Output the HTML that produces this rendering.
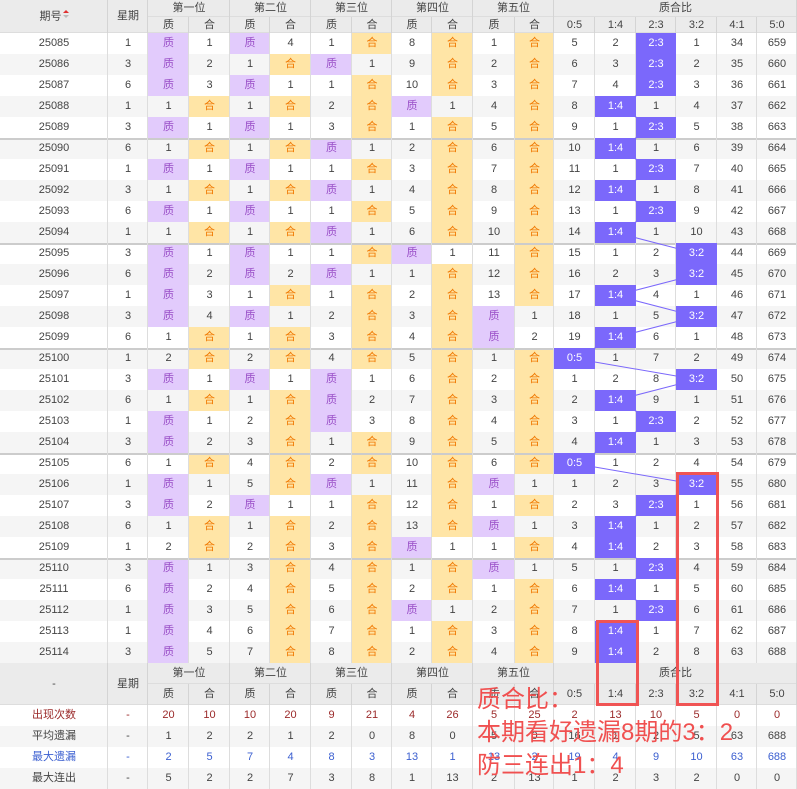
<!DOCTYPE html>
<html><head><meta charset="utf-8">
<style>
*{margin:0;padding:0;box-sizing:border-box}
body{width:797px;height:788px;overflow:hidden;background:#fff;font-family:"Liberation Sans","Noto Sans CJK SC",sans-serif;font-size:11px;color:#444;position:relative}
table{border-collapse:collapse;table-layout:fixed;width:797px;position:absolute;left:0;top:0}
td{height:21px;padding:0;text-align:center;white-space:nowrap;box-shadow:inset -1px 0 0 #ddd;line-height:21px;overflow:hidden}
tr.e td{background:#f5f5f5}
tr.g td{box-shadow:inset -1px 0 0 #ddd,inset 0 2px 0 #ccc}
.hd td{background:#ebebeb;color:#444;font-size:11px;box-shadow:inset -1px 0 0 #d4d4d4,inset 0 -1px 0 #ddd}
.h1 td{height:17px;line-height:17px}
.h2 td{height:16px;line-height:16px}
.f1 td{height:21px;line-height:21px}
td.z{background:#e2cbfc!important;color:#9a4fc8}
td.h{background:#ffe5a6!important;color:#f07800}
td.a{background:#7b68fb!important;color:#fff;position:relative;z-index:2;box-shadow:none!important}
tr.r td{color:#9b2a2a}
tr.b td{color:#3b5fd0}
svg{position:absolute;left:0;top:0;z-index:1}
.box{position:absolute;border:3px solid #f05454;z-index:3}
.note{position:absolute;left:477px;top:683px;z-index:4;color:#f05050;font-size:24px;line-height:33px;font-family:"Liberation Sans","Noto Sans CJK SC",sans-serif;white-space:nowrap}
.arr{display:inline-block;width:6px;vertical-align:middle;margin-left:1px}
</style></head><body>
<table>
<colgroup><col style="width:108px"><col style="width:40px"><col style="width:41px"><col style="width:41px"><col style="width:40px"><col style="width:41px"><col style="width:41px"><col style="width:40px"><col style="width:40px"><col style="width:41px"><col style="width:42px"><col style="width:39px"><col style="width:41px"><col style="width:41px"><col style="width:40px"><col style="width:41px"><col style="width:40px"><col style="width:40px"></colgroup>
<tr class="hd h1"><td rowspan="2">期号<span class="arr"><svg width="6" height="10" style="position:static"><path d="M0 4L3 1L6 4Z" fill="#e03030"/><path d="M0 6L3 9L6 6Z" fill="#bbb"/></svg></span></td><td rowspan="2">星期</td><td colspan="2">第一位</td><td colspan="2">第二位</td><td colspan="2">第三位</td><td colspan="2">第四位</td><td colspan="2">第五位</td><td colspan="6">质合比</td></tr>
<tr class="hd h2"><td>质</td><td>合</td><td>质</td><td>合</td><td>质</td><td>合</td><td>质</td><td>合</td><td>质</td><td>合</td><td>0:5</td><td>1:4</td><td>2:3</td><td>3:2</td><td>4:1</td><td>5:0</td></tr>
<tr><td>25085</td><td>1</td><td class="z">质</td><td>1</td><td class="z">质</td><td>4</td><td>1</td><td class="h">合</td><td>8</td><td class="h">合</td><td>1</td><td class="h">合</td><td>5</td><td>2</td><td class="a">2:3</td><td>1</td><td>34</td><td>659</td></tr>
<tr class="e"><td>25086</td><td>3</td><td class="z">质</td><td>2</td><td>1</td><td class="h">合</td><td class="z">质</td><td>1</td><td>9</td><td class="h">合</td><td>2</td><td class="h">合</td><td>6</td><td>3</td><td class="a">2:3</td><td>2</td><td>35</td><td>660</td></tr>
<tr><td>25087</td><td>6</td><td class="z">质</td><td>3</td><td class="z">质</td><td>1</td><td>1</td><td class="h">合</td><td>10</td><td class="h">合</td><td>3</td><td class="h">合</td><td>7</td><td>4</td><td class="a">2:3</td><td>3</td><td>36</td><td>661</td></tr>
<tr class="e"><td>25088</td><td>1</td><td>1</td><td class="h">合</td><td>1</td><td class="h">合</td><td>2</td><td class="h">合</td><td class="z">质</td><td>1</td><td>4</td><td class="h">合</td><td>8</td><td class="a">1:4</td><td>1</td><td>4</td><td>37</td><td>662</td></tr>
<tr><td>25089</td><td>3</td><td class="z">质</td><td>1</td><td class="z">质</td><td>1</td><td>3</td><td class="h">合</td><td>1</td><td class="h">合</td><td>5</td><td class="h">合</td><td>9</td><td>1</td><td class="a">2:3</td><td>5</td><td>38</td><td>663</td></tr>
<tr class="e g"><td>25090</td><td>6</td><td>1</td><td class="h">合</td><td>1</td><td class="h">合</td><td class="z">质</td><td>1</td><td>2</td><td class="h">合</td><td>6</td><td class="h">合</td><td>10</td><td class="a">1:4</td><td>1</td><td>6</td><td>39</td><td>664</td></tr>
<tr><td>25091</td><td>1</td><td class="z">质</td><td>1</td><td class="z">质</td><td>1</td><td>1</td><td class="h">合</td><td>3</td><td class="h">合</td><td>7</td><td class="h">合</td><td>11</td><td>1</td><td class="a">2:3</td><td>7</td><td>40</td><td>665</td></tr>
<tr class="e"><td>25092</td><td>3</td><td>1</td><td class="h">合</td><td>1</td><td class="h">合</td><td class="z">质</td><td>1</td><td>4</td><td class="h">合</td><td>8</td><td class="h">合</td><td>12</td><td class="a">1:4</td><td>1</td><td>8</td><td>41</td><td>666</td></tr>
<tr><td>25093</td><td>6</td><td class="z">质</td><td>1</td><td class="z">质</td><td>1</td><td>1</td><td class="h">合</td><td>5</td><td class="h">合</td><td>9</td><td class="h">合</td><td>13</td><td>1</td><td class="a">2:3</td><td>9</td><td>42</td><td>667</td></tr>
<tr class="e"><td>25094</td><td>1</td><td>1</td><td class="h">合</td><td>1</td><td class="h">合</td><td class="z">质</td><td>1</td><td>6</td><td class="h">合</td><td>10</td><td class="h">合</td><td>14</td><td class="a">1:4</td><td>1</td><td>10</td><td>43</td><td>668</td></tr>
<tr class="g"><td>25095</td><td>3</td><td class="z">质</td><td>1</td><td class="z">质</td><td>1</td><td>1</td><td class="h">合</td><td class="z">质</td><td>1</td><td>11</td><td class="h">合</td><td>15</td><td>1</td><td>2</td><td class="a">3:2</td><td>44</td><td>669</td></tr>
<tr class="e"><td>25096</td><td>6</td><td class="z">质</td><td>2</td><td class="z">质</td><td>2</td><td class="z">质</td><td>1</td><td>1</td><td class="h">合</td><td>12</td><td class="h">合</td><td>16</td><td>2</td><td>3</td><td class="a">3:2</td><td>45</td><td>670</td></tr>
<tr><td>25097</td><td>1</td><td class="z">质</td><td>3</td><td>1</td><td class="h">合</td><td>1</td><td class="h">合</td><td>2</td><td class="h">合</td><td>13</td><td class="h">合</td><td>17</td><td class="a">1:4</td><td>4</td><td>1</td><td>46</td><td>671</td></tr>
<tr class="e"><td>25098</td><td>3</td><td class="z">质</td><td>4</td><td class="z">质</td><td>1</td><td>2</td><td class="h">合</td><td>3</td><td class="h">合</td><td class="z">质</td><td>1</td><td>18</td><td>1</td><td>5</td><td class="a">3:2</td><td>47</td><td>672</td></tr>
<tr><td>25099</td><td>6</td><td>1</td><td class="h">合</td><td>1</td><td class="h">合</td><td>3</td><td class="h">合</td><td>4</td><td class="h">合</td><td class="z">质</td><td>2</td><td>19</td><td class="a">1:4</td><td>6</td><td>1</td><td>48</td><td>673</td></tr>
<tr class="e g"><td>25100</td><td>1</td><td>2</td><td class="h">合</td><td>2</td><td class="h">合</td><td>4</td><td class="h">合</td><td>5</td><td class="h">合</td><td>1</td><td class="h">合</td><td class="a">0:5</td><td>1</td><td>7</td><td>2</td><td>49</td><td>674</td></tr>
<tr><td>25101</td><td>3</td><td class="z">质</td><td>1</td><td class="z">质</td><td>1</td><td class="z">质</td><td>1</td><td>6</td><td class="h">合</td><td>2</td><td class="h">合</td><td>1</td><td>2</td><td>8</td><td class="a">3:2</td><td>50</td><td>675</td></tr>
<tr class="e"><td>25102</td><td>6</td><td>1</td><td class="h">合</td><td>1</td><td class="h">合</td><td class="z">质</td><td>2</td><td>7</td><td class="h">合</td><td>3</td><td class="h">合</td><td>2</td><td class="a">1:4</td><td>9</td><td>1</td><td>51</td><td>676</td></tr>
<tr><td>25103</td><td>1</td><td class="z">质</td><td>1</td><td>2</td><td class="h">合</td><td class="z">质</td><td>3</td><td>8</td><td class="h">合</td><td>4</td><td class="h">合</td><td>3</td><td>1</td><td class="a">2:3</td><td>2</td><td>52</td><td>677</td></tr>
<tr class="e"><td>25104</td><td>3</td><td class="z">质</td><td>2</td><td>3</td><td class="h">合</td><td>1</td><td class="h">合</td><td>9</td><td class="h">合</td><td>5</td><td class="h">合</td><td>4</td><td class="a">1:4</td><td>1</td><td>3</td><td>53</td><td>678</td></tr>
<tr class="g"><td>25105</td><td>6</td><td>1</td><td class="h">合</td><td>4</td><td class="h">合</td><td>2</td><td class="h">合</td><td>10</td><td class="h">合</td><td>6</td><td class="h">合</td><td class="a">0:5</td><td>1</td><td>2</td><td>4</td><td>54</td><td>679</td></tr>
<tr class="e"><td>25106</td><td>1</td><td class="z">质</td><td>1</td><td>5</td><td class="h">合</td><td class="z">质</td><td>1</td><td>11</td><td class="h">合</td><td class="z">质</td><td>1</td><td>1</td><td>2</td><td>3</td><td class="a">3:2</td><td>55</td><td>680</td></tr>
<tr><td>25107</td><td>3</td><td class="z">质</td><td>2</td><td class="z">质</td><td>1</td><td>1</td><td class="h">合</td><td>12</td><td class="h">合</td><td>1</td><td class="h">合</td><td>2</td><td>3</td><td class="a">2:3</td><td>1</td><td>56</td><td>681</td></tr>
<tr class="e"><td>25108</td><td>6</td><td>1</td><td class="h">合</td><td>1</td><td class="h">合</td><td>2</td><td class="h">合</td><td>13</td><td class="h">合</td><td class="z">质</td><td>1</td><td>3</td><td class="a">1:4</td><td>1</td><td>2</td><td>57</td><td>682</td></tr>
<tr><td>25109</td><td>1</td><td>2</td><td class="h">合</td><td>2</td><td class="h">合</td><td>3</td><td class="h">合</td><td class="z">质</td><td>1</td><td>1</td><td class="h">合</td><td>4</td><td class="a">1:4</td><td>2</td><td>3</td><td>58</td><td>683</td></tr>
<tr class="e g"><td>25110</td><td>3</td><td class="z">质</td><td>1</td><td>3</td><td class="h">合</td><td>4</td><td class="h">合</td><td>1</td><td class="h">合</td><td class="z">质</td><td>1</td><td>5</td><td>1</td><td class="a">2:3</td><td>4</td><td>59</td><td>684</td></tr>
<tr><td>25111</td><td>6</td><td class="z">质</td><td>2</td><td>4</td><td class="h">合</td><td>5</td><td class="h">合</td><td>2</td><td class="h">合</td><td>1</td><td class="h">合</td><td>6</td><td class="a">1:4</td><td>1</td><td>5</td><td>60</td><td>685</td></tr>
<tr class="e"><td>25112</td><td>1</td><td class="z">质</td><td>3</td><td>5</td><td class="h">合</td><td>6</td><td class="h">合</td><td class="z">质</td><td>1</td><td>2</td><td class="h">合</td><td>7</td><td>1</td><td class="a">2:3</td><td>6</td><td>61</td><td>686</td></tr>
<tr><td>25113</td><td>1</td><td class="z">质</td><td>4</td><td>6</td><td class="h">合</td><td>7</td><td class="h">合</td><td>1</td><td class="h">合</td><td>3</td><td class="h">合</td><td>8</td><td class="a">1:4</td><td>1</td><td>7</td><td>62</td><td>687</td></tr>
<tr class="e"><td>25114</td><td>3</td><td class="z">质</td><td>5</td><td>7</td><td class="h">合</td><td>8</td><td class="h">合</td><td>2</td><td class="h">合</td><td>4</td><td class="h">合</td><td>9</td><td class="a">1:4</td><td>2</td><td>8</td><td>63</td><td>688</td></tr>
<tr class="hd f1"><td rowspan="2">-</td><td rowspan="2">星期</td><td colspan="2">第一位</td><td colspan="2">第二位</td><td colspan="2">第三位</td><td colspan="2">第四位</td><td colspan="2">第五位</td><td colspan="6">质合比</td></tr>
<tr class="hd f1"><td>质</td><td>合</td><td>质</td><td>合</td><td>质</td><td>合</td><td>质</td><td>合</td><td>质</td><td>合</td><td>0:5</td><td>1:4</td><td>2:3</td><td>3:2</td><td>4:1</td><td>5:0</td></tr>
<tr class="r"><td>出现次数</td><td>-</td><td>20</td><td>10</td><td>10</td><td>20</td><td>9</td><td>21</td><td>4</td><td>26</td><td>5</td><td>25</td><td>2</td><td>13</td><td>10</td><td>5</td><td>0</td><td>0</td></tr>
<tr class="e"><td>平均遗漏</td><td>-</td><td>1</td><td>2</td><td>2</td><td>1</td><td>2</td><td>0</td><td>8</td><td>0</td><td>5</td><td>0</td><td>16</td><td>1</td><td>2</td><td>5</td><td>63</td><td>688</td></tr>
<tr class="b"><td>最大遗漏</td><td>-</td><td>2</td><td>5</td><td>7</td><td>4</td><td>8</td><td>3</td><td>13</td><td>1</td><td>13</td><td>2</td><td>19</td><td>4</td><td>9</td><td>10</td><td>63</td><td>688</td></tr>
<tr class="e"><td>最大连出</td><td>-</td><td>5</td><td>2</td><td>2</td><td>7</td><td>3</td><td>8</td><td>1</td><td>13</td><td>2</td><td>13</td><td>1</td><td>2</td><td>3</td><td>2</td><td>0</td><td>0</td></tr>
</table>
<svg width="797" height="788"><polyline fill="none" stroke="#7b68fb" stroke-width="1" points="656,43.5 656,85.5 615.5,106.5 656,127.5 615.5,148.5 656,169.5 615.5,190.5 656,211.5 615.5,232.5 696.5,253.5 696.5,274.5 615.5,295.5 696.5,316.5 615.5,337.5 574.5,358.5 696.5,379.5 615.5,400.5 656,421.5 615.5,442.5 574.5,463.5 696.5,484.5 656,505.5 615.5,526.5 615.5,547.5 656,568.5 615.5,589.5 656,610.5 615.5,631.5 615.5,652.5"/></svg>
<div class="box" style="left:596px;top:620px;width:43px;height:86px"></div>
<div class="box" style="left:676px;top:472px;width:43px;height:234px"></div>
<div class="note">质合比：<br>本期看好遗漏8期的3：2<br>防三连出1：4</div>
</body></html>
